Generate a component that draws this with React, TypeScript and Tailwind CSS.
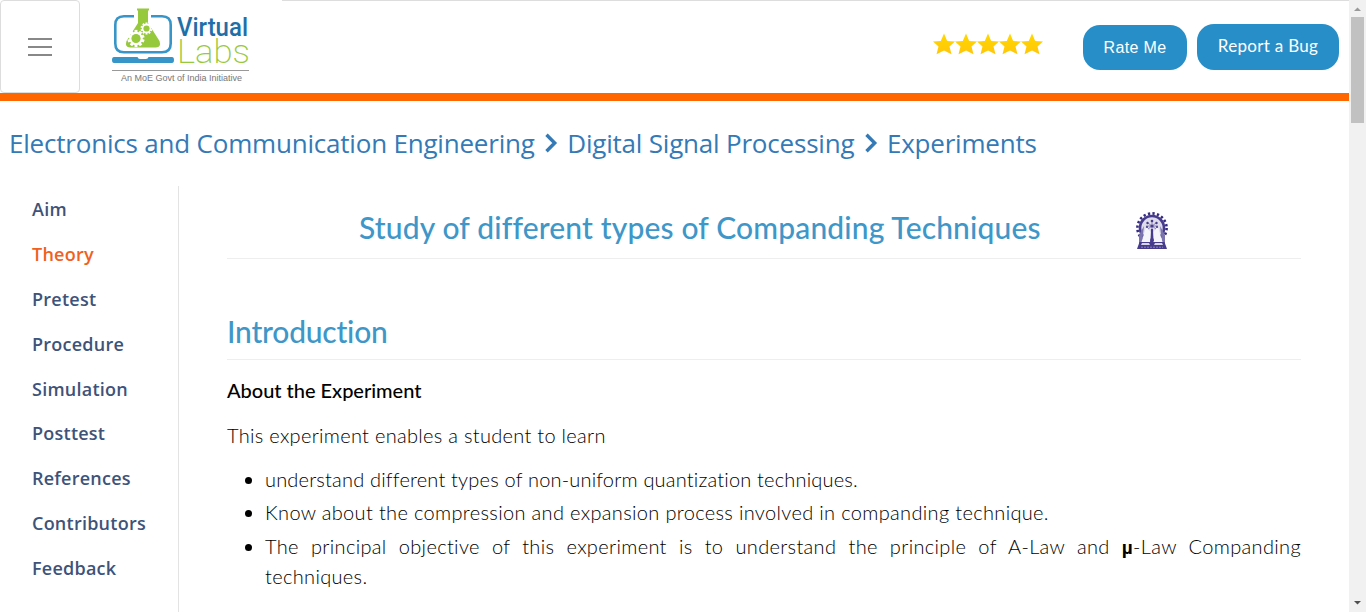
import React from "react";

const navItems = ["Aim", "Theory", "Pretest", "Procedure", "Simulation", "Posttest", "References", "Contributors", "Feedback"];

function Gear({ cx, cy, r, hole }: { cx: number; cy: number; r: number; hole: number }) {
  return (
    <g transform={`translate(${cx} ${cy})`}>
      <g fill="#fff">
        {[0, 36, 72, 108, 144].map((a) => (
          <rect key={a} x={-r * 0.17} y={-r} width={r * 0.34} height={r * 2} transform={`rotate(${a})`} />
        ))}
        <circle r={r * 0.78} />
      </g>
      <circle r={hole} fill="#97c93d" />
    </g>
  );
}

function Logo() {
  return (
    <svg width="140" height="78" viewBox="111 7 140 78" className="block shrink-0 overflow-visible">
      <path d="M134 16.300H124Q115.300 16.300 115.300 25V43.500Q115.300 52.300 124 52.300H162Q170.700 52.300 170.700 43.500V25Q170.700 16.300 162 16.300H151" fill="none" stroke="#3795c8" strokeWidth="2.600" />
      <path d="M137 8.500H149V10.500H148V23L159.500 41Q161.500 47 156 47.500H130Q124.500 47 126.500 41L138 23V10.500H137Z" fill="#97c93d" />
      <Gear cx={136} cy={38.500} r={8.600} hole={4.600} />
      <Gear cx={146.500} cy={28.500} r={6} hole={3.100} />
      <path d="M114 57H137.500Q138 59 140 59H146Q148 59 148.500 57H172Q174 57 174 60Q174 63 172 63H114Q112 63 112 60Q112 57 114 57Z" fill="#3795c8" />
      <text x="177" y="36" textLength="71" lengthAdjust="spacingAndGlyphs" fontFamily="Roboto, sans-serif" fontSize="25.500" fontWeight="500" fill="#1f6fa8">Virtual</text>
      <text x="177" y="63" textLength="73" lengthAdjust="spacingAndGlyphs" fontFamily="Roboto, sans-serif" fontSize="33" fontWeight="200" fill="#97c93d">Labs</text>
      <path d="M112 70.500H249" stroke="#999" />
      <text x="121" y="81.300" textLength="121" lengthAdjust="spacingAndGlyphs" fontFamily="'Liberation Sans', sans-serif" fontSize="9" fill="#777">An MoE Govt of India Initiative</text>
    </svg>
  );
}

function Stars() {
  return (
    <svg width="110" height="22" viewBox="0 0 110 22" className="mr-10 shrink-0">
      <defs>
        <linearGradient id="gold" x1="0" y1="0" x2="0" y2="1">
          <stop offset="0" stopColor="#ffd800" />
          <stop offset="1" stopColor="#ffc60a" />
        </linearGradient>
      </defs>
      {[0, 1, 2, 3, 4].map((i) => (
        <path key={i} transform={`translate(${i * 22} 0)`} d="M11 0.500L14.200 8L22 8.600L16.500 13.500L18.500 21.300L11 17.600L3.500 21.300L5.500 13.500L0 8.600L7.800 8Z" fill="url(#gold)" />
      ))}
    </svg>
  );
}

function Seal() {
  return (
    <svg width="34" height="38" viewBox="0 0 34 38" className="block">
      <circle cx="17" cy="16" r="14.600" fill="none" stroke="#352a80" strokeWidth="2.600" strokeDasharray="2.300 2.286" />
      <circle cx="17" cy="16" r="12" fill="#dedbea" stroke="#463b8c" strokeWidth="2.600" />
      <path d="M4 23L9 14L7 31H27L25 14L30 23V32H4Z" fill="#7c74af" />
      <path d="M11 15L6.500 30H15L16 20ZM23 15L27.500 30H19L18 20Z" fill="#f5f4fa" />
      <path d="M17 8V33M13 11L21 17M21 11L13 17M11 14H23" stroke="#6b62a4" strokeWidth="0.700" />
      <g fill="#463b8c">
        <circle cx="17" cy="9" r="1.300" /><circle cx="12.500" cy="11" r="1.200" /><circle cx="21.500" cy="11" r="1.200" /><circle cx="12" cy="15" r="1.100" /><circle cx="22" cy="15" r="1.100" /><circle cx="17" cy="14" r="1.600" />
        <path d="M16 17H18L18.500 31H15.500Z" />
        <path d="M2 37L4.500 30H29.500L32 37Z" />
      </g>
      <path d="M7 31H14L15 33H6ZM27 31H20L19 33H28Z" fill="#d8d5e8" />
      <path d="M6 35.200H28" stroke="#8e87ba" strokeDasharray="2 1" />
    </svg>
  );
}

function Chevron() {
  return (
    <svg width="14" height="20" viewBox="0 0 14 20" className="ml-[9.500px] mr-[9px] mt-[-1px] shrink-0">
      <path d="M2.500 1.800L10.700 10L2.500 18.200" fill="none" stroke="#337ab7" strokeWidth="3.400" />
    </svg>
  );
}

export default function App() {
  return (
    <div className="flex h-[612px] w-full overflow-hidden bg-white font-[Lato,sans-serif] text-black [font-variant-ligatures:none]">
      <div className="flex min-w-0 flex-1 flex-col">
        <header className="flex h-[101px] shrink-0 items-start border-b-8 border-[#ff6600]">
          <button className="flex h-[93px] w-20 shrink-0 flex-col items-center justify-center gap-1.5 rounded-[4px] border border-[#ddd]">
            <span className="h-0.5 w-6 bg-[#888]" />
            <span className="h-0.5 w-6 bg-[#888]" />
            <span className="h-0.5 w-6 bg-[#888]" />
          </button>
          <div className="ml-[31px] mt-[7px] w-[171px] shrink-0"><Logo /></div>
          <div className="flex h-[93px] flex-1 items-start justify-end border-t border-[#ddd] pr-2.5">
            <div className="mt-[32px]"><Stars /></div>
            <button className="mt-6 h-[45px] w-[104px] rounded-[17px] bg-[#288ec8] font-['Liberation_Sans',sans-serif] text-base tracking-[0.35px] text-white">Rate Me</button>
            <button className="ml-2.5 mt-[23px] h-[46px] w-[142px] rounded-[17px] bg-[#288ec8] pb-0.5 text-[17px] tracking-[0.3px] text-white">Report a Bug</button>
          </div>
        </header>
        <nav className="mt-[22px] flex h-10 shrink-0 items-center whitespace-nowrap pl-[9px] font-['Open_Sans',sans-serif] text-[26px] tracking-[-0.2px] text-[#337ab7]">
          <a>Electronics and Communication Engineering</a>
          <Chevron />
          <a>Digital Signal Processing</a>
          <Chevron />
          <a>Experiments</a>
        </nav>
        <div className="mt-[23px] flex min-h-0 flex-1">
          <aside className="w-[179px] shrink-0 border-r border-[#e3e3e3] pl-8 font-['Open_Sans',sans-serif] text-[18px] font-semibold tracking-[0.24px] text-[#3e5379]">
            {navItems.map((item) => (
              <a key={item} className={item === "Theory" ? "block h-[44.880px] leading-[47px] text-[#f06022]" : "block h-[44.880px] leading-[47px]"}>{item}</a>
            ))}
          </aside>
          <main className="w-[1122px] pl-12">
            <div className="flex h-[73px] items-start border-b border-[#eee] text-[#3e97c8]">
              <h1 className="ml-[132px] mt-[21px] w-[776px] whitespace-nowrap text-[30px] leading-[40px] font-medium tracking-[0.150px]">Study of different types of Companding Techniques</h1>
              <div className="mt-[26px]"><Seal /></div>
            </div>
            <h2 className="h-[101px] border-b border-[#eee] pt-[52px] text-[30px] leading-[40px] font-medium tracking-[-0.220px] text-[#3e97c8]">Introduction</h2>
            <h3 className="mt-[15px] text-[20px] leading-[30px] font-medium tracking-[-0.020px]">About the Experiment</h3>
            <p className="mt-[15px] text-[20px] leading-[30px] font-light tracking-[0.3px]">This experiment enables a student to learn</p>
            <ul className="mt-[15px] list-disc pl-[38px] text-[20px] leading-[29px] font-light tracking-[0.34px]">
              <li className="mb-[4px] tracking-[0.19px]">understand different types of non-uniform quantization techniques.</li>
              <li className="mb-[4.500px]">Know about the compression and expansion process involved in companding technique.</li>
              <li className="text-justify">The principal objective of this experiment is to understand the principle of A-Law and <span className="font-['Liberation_Sans',sans-serif] text-[19px] font-bold">µ</span>-Law Companding techniques.</li>
            </ul>
          </main>
        </div>
      </div>
      <div className="flex w-[17px] shrink-0 flex-col items-center bg-[#f1f1f1]">
        <svg width="17" height="17" viewBox="0 0 17 17"><path d="M5 11H12L8.500 7.500Z" fill="#999" /></svg>
        <div className="h-[106px] w-[13px] bg-[#c1c1c1]" />
        <svg width="17" height="17" viewBox="0 0 17 17" className="mt-auto"><path d="M5 6H12L8.500 9.500Z" fill="#505050" /></svg>
      </div>
    </div>
  );
}
